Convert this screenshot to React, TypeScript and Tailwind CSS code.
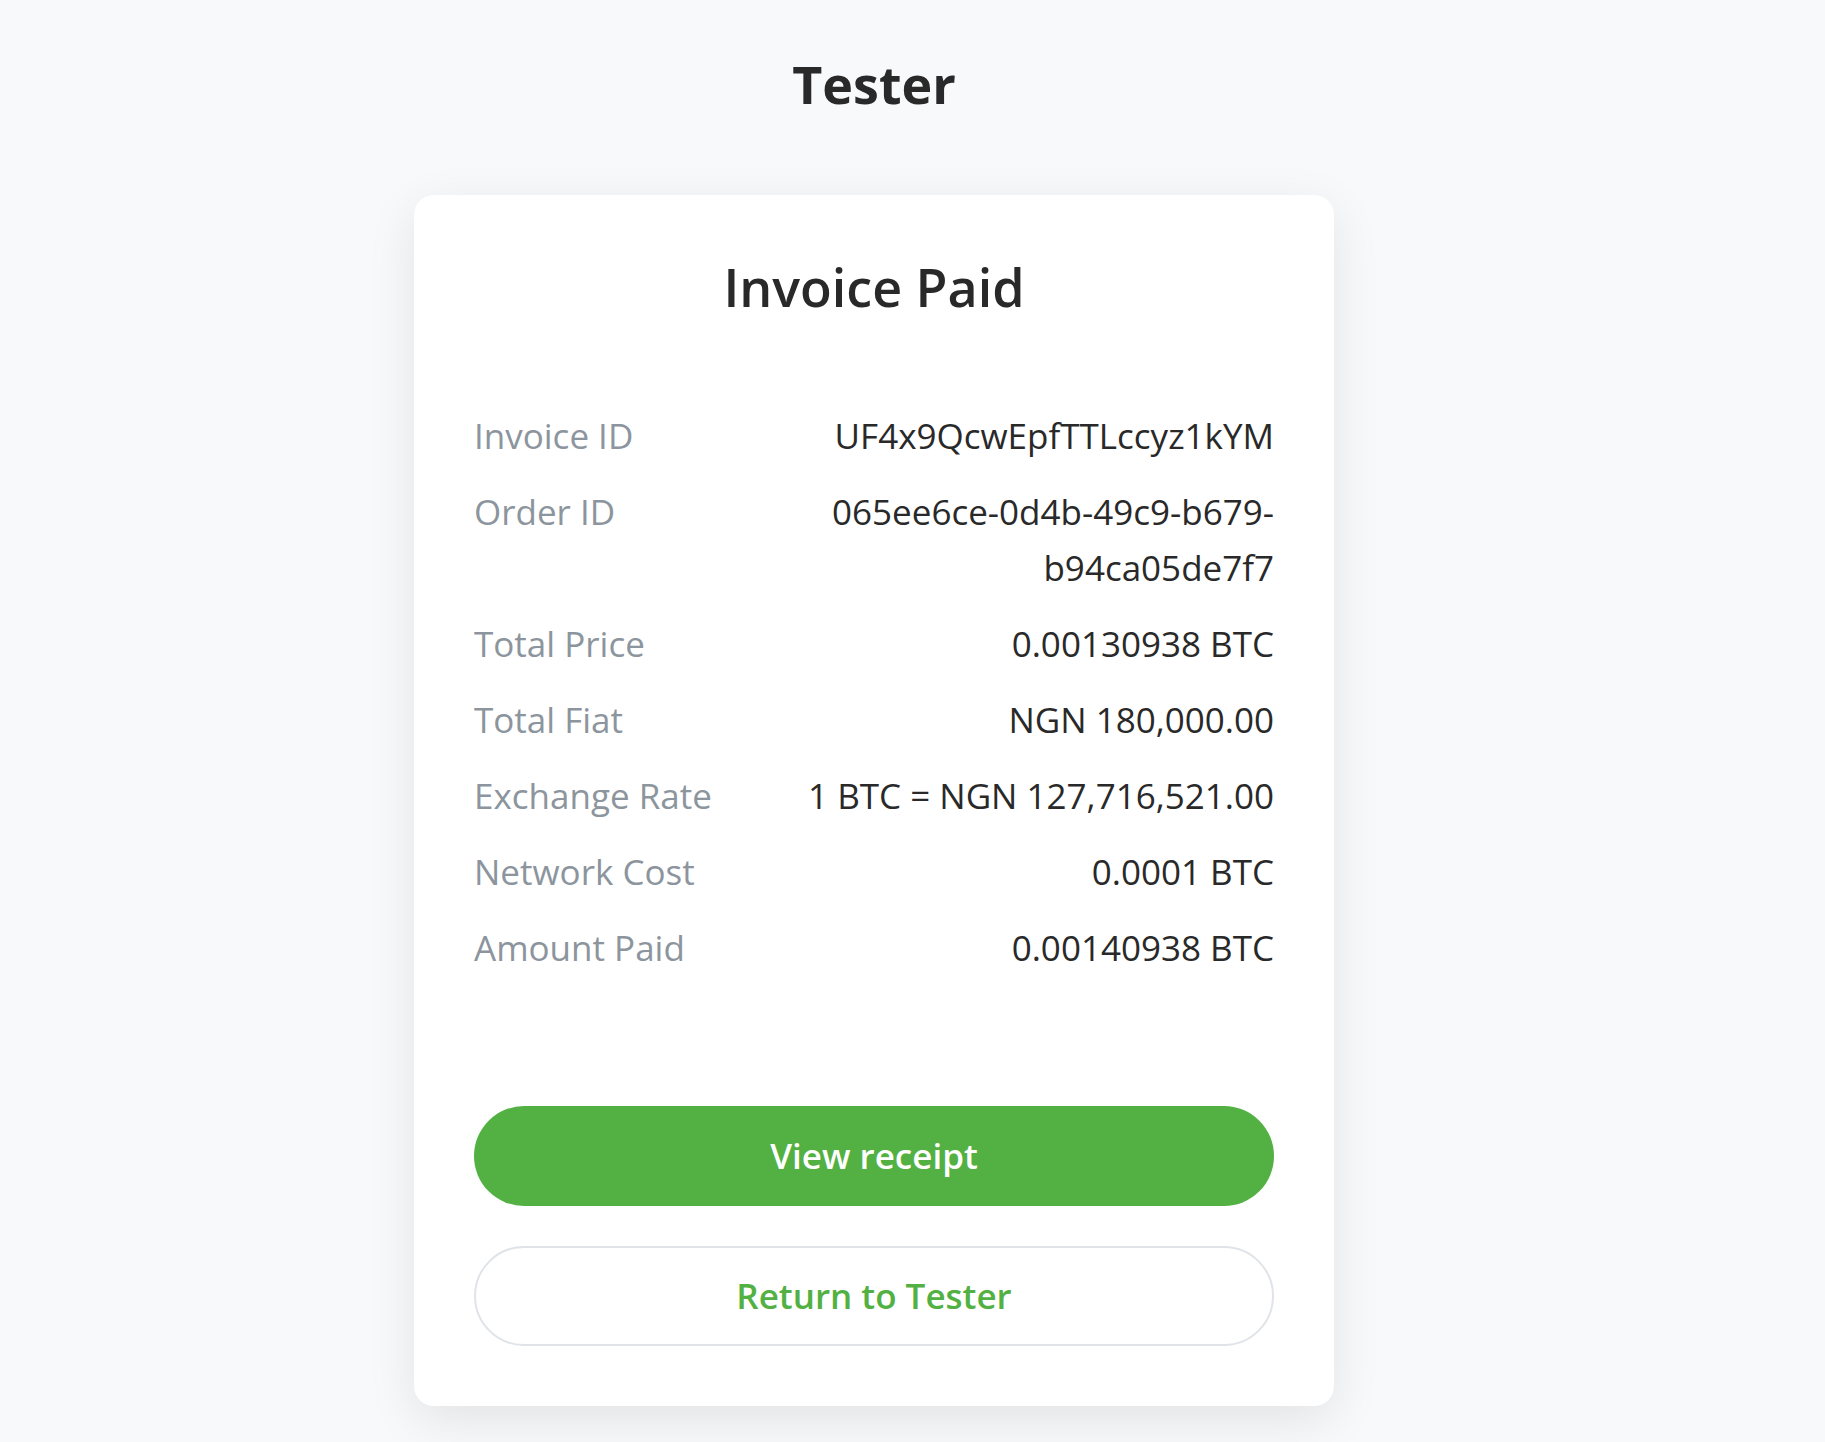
import React from "react";

/* ── Invoice rows ───────────────────────────────────── */
const rows = [
  { label: "Invoice ID", value: "UF4x9QcwEpfTTLccyz1kYM" },
  { label: "Order ID", value: "065ee6ce-0d4b-49c9-b679-b94ca05de7f7" },
  { label: "Total Price", value: "0.00130938 BTC" },
  { label: "Total Fiat", value: "NGN 180,000.00" },
  { label: "Exchange Rate", value: "1 BTC = NGN 127,716,521.00" },
  { label: "Network Cost", value: "0.0001 BTC" },
  { label: "Amount Paid", value: "0.00140938 BTC" },
];

export default function App() {
  return (
    <div
      className="min-h-screen w-full bg-[#f8f9fa] flex flex-col items-center pr-[77px] pt-[53px] pb-[36px]"
      style={{ fontFamily: "'Open Sans', 'Noto Sans', sans-serif" }}
    >
      {/* Store name */}
      <h1 className="text-[52px] leading-[62px] font-bold text-[#292929]">Tester</h1>

      {/* Card */}
      <div className="mt-[80px] w-[920px] rounded-[20px] bg-white px-[60px] pt-[59px] pb-[60px] shadow-[0_14px_50px_rgba(0,0,0,0.09)]">
        <h2 className="text-center text-[52px] leading-[65px] font-semibold text-[#292929]">Invoice Paid</h2>

        <div className="mt-[89px] flex flex-col gap-[20px]">
          {rows.map(({ label, value }) => (
            <div key={label} className="flex justify-between gap-8 text-[35px] leading-[56px]">
              <span className="shrink-0 text-[#8c959d]">{label}</span>
              <span className="max-w-[500px] text-right text-[#292929]">{value}</span>
            </div>
          ))}
        </div>

        {/* Actions */}
        <div className="mt-[130px] flex flex-col gap-[40px]">
          <button className="h-[100px] w-full rounded-full bg-[#52b142] text-[35px] font-semibold text-white">
            View receipt
          </button>
          <button className="h-[100px] w-full rounded-full border-2 border-[#e0e4e8] bg-white text-[35px] font-semibold text-[#52b142]">
            Return to Tester
          </button>
        </div>
      </div>
    </div>
  );
}
